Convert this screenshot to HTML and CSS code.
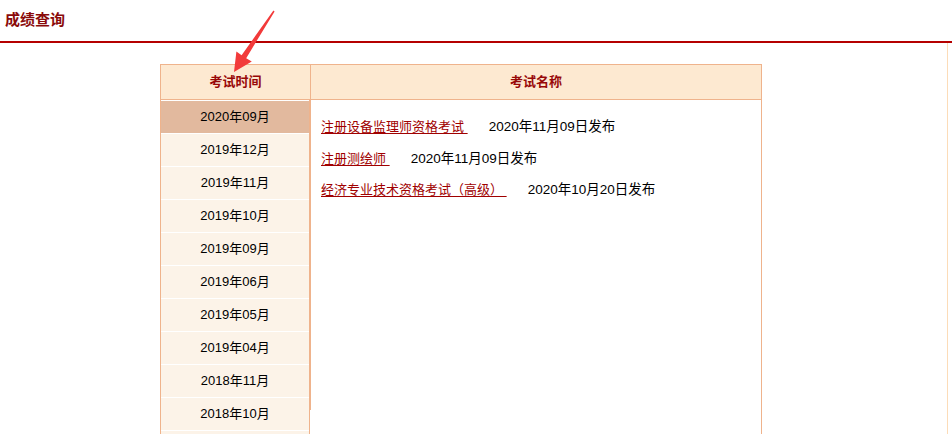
FILE: index.html
```html
<!DOCTYPE html>
<html lang="zh-CN">
<head>
<meta charset="utf-8">
<title>成绩查询</title>
<link rel="stylesheet" href="styles.css">
</head>
<body>
<header class="top"><h1 class="title">成绩查询</h1></header>
<div class="page">
  <div class="board">
    <div class="head">
      <div class="hcell hl">考试时间</div>
      <div class="hcell hr">考试名称</div>
    </div>
    <div class="body">
      <ul class="dates">
        <li class="on">2020年09月</li>
        <li>2019年12月</li>
        <li>2019年11月</li>
        <li>2019年10月</li>
        <li>2019年09月</li>
        <li>2019年06月</li>
        <li>2019年05月</li>
        <li>2019年04月</li>
        <li>2018年11月</li>
        <li>2018年10月</li>
        <li class="blank"></li>
      </ul>
      <div class="panel">
        <div class="list">
          <div class="item"><a href="#">注册设备监理师资格考试&nbsp;</a><span class="date">2020年11月09日发布</span></div>
          <div class="item"><a href="#">注册测绘师&nbsp;</a><span class="date">2020年11月09日发布</span></div>
          <div class="item"><a href="#">经济专业技术资格考试（高级）&nbsp;</a><span class="date">2020年10月20日发布</span></div>
        </div>
      </div>
    </div>
  </div>
</div>
<svg class="arrow" width="952" height="434" viewBox="0 0 952 434" aria-hidden="true">
  <polygon points="234,72 236.4,51.5 241.6,55.2 273.4,10.4 274.6,11.4 246.2,58.2 251.8,61.6" fill="#f23a3a"/>
</svg>
</body>
</html>
```
FILE: styles.css
```css
html, body {
  margin: 0;
  padding: 0;
  background: #fff;
  overflow: hidden;
}
body {
  font-family: "Liberation Sans", "Noto Sans CJK SC", sans-serif;
  font-size: 13px;
  color: #000;
  width: 952px;
  height: 434px;
  position: relative;
}
.top {
  height: 41px;
  border-bottom: 2px solid #b50000;
}
.title {
  margin: 0;
  padding-left: 5px;
  font-size: 15px;
  font-weight: bold;
  line-height: 40px;
  color: #8a0a0a;
}
.page {
  width: 948px;
  border-right: 1px solid #fcdcb8;
  padding-top: 21px;
  height: 400px;
  box-sizing: border-box;
  overflow: hidden;
}
.board {
  margin-left: 160px;
  width: 602px;
}
.head {
  display: flex;
  height: 36px;
  box-sizing: border-box;
  border: 1px solid #efb38c;
  background: #fde9d1;
}
.hcell {
  text-align: center;
  line-height: 34px;
  font-weight: bold;
  font-size: 13px;
  color: #980808;
}
.hl {
  width: 149px;
  border-right: 1px solid #efb38c;
}
.hr {
  flex: 1;
}
.body {
  display: flex;
  align-items: flex-start;
}
.dates {
  width: 150px;
  box-sizing: border-box;
  margin: 0;
  padding: 1px 0 0;
  list-style: none;
  border-left: 1px solid #efb38c;
  border-right: 1px solid #efb38c;
}
.dates li {
  height: 32px;
  line-height: 32px;
  text-align: center;
  background: #fcf3e8;
  margin-bottom: 1px;
}
.dates li.on {
  background: #e2b99e;
}
.panel {
  flex: 1;
  border-right: 1px solid #efb38c;
  height: 340px;
}
.list {
  border-left: 1px solid #efb38c;
  height: 310px;
  padding: 11px 0 0 10px;
  box-sizing: border-box;
}
.item {
  line-height: 31.5px;
  white-space: nowrap;
}
.item a {
  color: #a00000;
  text-decoration: underline;
  text-decoration-thickness: 1px;
  text-underline-offset: 2px;
  margin-right: 21px;
}
.date {
  color: #000;
  font-size: 13.5px;
}
.arrow {
  position: absolute;
  left: 0;
  top: 0;
  pointer-events: none;
}
```
